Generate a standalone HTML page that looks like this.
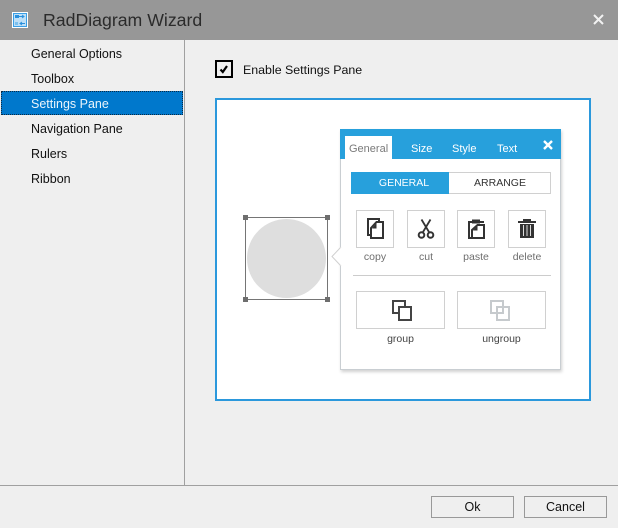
<!DOCTYPE html>
<html><head><meta charset="utf-8">
<style>
html,body{margin:0;padding:0}
body{width:618px;height:528px;position:relative;overflow:hidden;background:#efefef;font-family:"Liberation Sans",sans-serif;color:#1a1a1a}
div,span{position:absolute;box-sizing:border-box;white-space:nowrap}
.nav{left:31px;font-size:12.5px;line-height:16px;color:#111}
.ib{width:38px;height:38px;top:210px;border:1px solid #d0d0d0;background:#fff}
.lb{font-size:10.5px;line-height:14px;color:#6e6e6e;text-align:center;top:250px}
.tab{top:141px;font-size:11px;line-height:16px;color:#fff}
.btn{top:496px;height:22px;width:83px;border:1px solid #999;text-align:center;font-size:12.5px;line-height:21px;color:#111}
svg{position:absolute;overflow:visible}
</style></head><body>
<div style="left:0;top:0;width:618px;height:40px;background:#979797"></div>
<svg style="left:12px;top:12px" width="16" height="16" viewBox="0 0 16 16"><rect x=".5" y=".5" width="15" height="15" fill="#3a9fe6" stroke="#fff"/><rect x="2" y="2" width="12" height="12" fill="#bfe0f7"/><rect x="3" y="3" width="4" height="3" fill="#2a90dd"/><path d="M7 4.500h4M10 3l2 1.500L10 6M13 11.500H8M10 10l-2 1.500 2 1.500" stroke="#2a90dd" fill="none"/><rect x="3" y="10" width="3" height="3" fill="#7cc0ee"/></svg>
<div style="left:43px;top:9px;font-size:17.7px;line-height:22px;color:#2b2b2b">RadDiagram Wizard</div>
<svg style="left:593px;top:14px" width="11" height="11" viewBox="0 0 11 11"><path d="M1 1l9 9M10 1l-9 9" stroke="#f2f2f2" stroke-width="2"/></svg>

<div style="left:184px;top:40px;width:1px;height:445px;background:#a0a0a0"></div>
<div class="nav" style="top:46px">General Options</div>
<div class="nav" style="top:71px">Toolbox</div>
<div style="left:1px;top:91px;width:182px;height:24px;background:#0078cc;border:1px dotted #0a2a45"></div>
<div class="nav" style="top:96px;color:#eaf4fb">Settings Pane</div>
<div class="nav" style="top:121px">Navigation Pane</div>
<div class="nav" style="top:146px">Rulers</div>
<div class="nav" style="top:171px">Ribbon</div>

<div style="left:215px;top:60px;width:18px;height:18px;border:2px solid #000;background:#efefef"></div>
<svg style="left:219px;top:65px" width="10" height="9" viewBox="0 0 10 9"><path d="M1.500 4.500L3.800 7 8 1" fill="none" stroke="#000" stroke-width="2.200"/></svg>
<div style="left:243px;top:62px;font-size:12.4px;line-height:16px;color:#111">Enable Settings Pane</div>

<div style="left:215px;top:98px;width:376px;height:303px;border:2px solid #2b98dc;background:#fff"></div>

<div style="left:247px;top:219px;width:79px;height:79px;border-radius:50%;background:#dedede"></div>
<div style="left:245px;top:217px;width:83px;height:83px;border:1px solid #757575"></div>
<div style="left:243px;top:215px;width:5px;height:5px;background:#6e6e6e"></div>
<div style="left:325px;top:215px;width:5px;height:5px;background:#6e6e6e"></div>
<div style="left:243px;top:297px;width:5px;height:5px;background:#6e6e6e"></div>
<div style="left:325px;top:297px;width:5px;height:5px;background:#6e6e6e"></div>

<div style="left:340px;top:129px;width:221px;height:241px;background:#fff;border:1px solid #c9ced2;box-shadow:1px 2px 3px rgba(0,0,0,.18)"></div>
<svg style="left:331px;top:246px" width="11" height="22" viewBox="0 0 11 22"><path d="M10 1L1 10.500 10 20" fill="#fff" stroke="#d0d0d0"/><rect x="9.500" y="1.500" width="2" height="18" fill="#fff"/></svg>
<div style="left:340px;top:129px;width:221px;height:30px;background:#27a0dc"></div>
<div style="left:345px;top:136px;width:47px;height:23px;background:#fff"></div>
<div class="tab" style="left:349px;color:#7a7a7a">General</div>
<div class="tab" style="left:411px">Size</div>
<div class="tab" style="left:452px">Style</div>
<div class="tab" style="left:497px">Text</div>
<svg style="left:543px;top:140px" width="10" height="10" viewBox="0 0 10 10"><path d="M1 1l8 8M9 1L1 9" stroke="#fff" stroke-width="2.400"/></svg>

<div style="left:351px;top:172px;width:200px;height:22px;border:1px solid #d0d0d0;background:#fff"></div>
<div style="left:351px;top:172px;width:98px;height:22px;padding-left:8px;background:#27a0dc;color:#fff;font-size:10.5px;line-height:23px;text-align:center">GENERAL</div>
<div style="left:449px;top:172px;width:102px;height:22px;color:#333;font-size:10.5px;line-height:23px;text-align:center">ARRANGE</div>

<div class="ib" style="left:356px"></div>
<div class="ib" style="left:407px"></div>
<div class="ib" style="left:457px"></div>
<div class="ib" style="left:508px"></div>
<svg style="left:356px;top:210px" width="38" height="38" viewBox="0 0 38 38"><path d="M14 25h-2V9h11v3" fill="none" stroke="#333" stroke-width="2"/><path d="M20.500 12H27v16H15v-10z" fill="#fff" stroke="#333" stroke-width="2"/><path d="M20.500 13v5.500H16z" fill="#333"/></svg>
<svg style="left:407px;top:210px" width="38" height="38" viewBox="0 0 38 38"><path d="M14.500 9.500L22 22M23.500 9.500L16 22" stroke="#333" stroke-width="1.800" fill="none"/><circle cx="14.500" cy="25" r="2.800" fill="#fff" stroke="#333" stroke-width="2"/><circle cx="23.500" cy="25" r="2.800" fill="#fff" stroke="#333" stroke-width="2"/></svg>
<svg style="left:457px;top:210px" width="38" height="38" viewBox="0 0 38 38"><path d="M15 28h-3V12h3M23 12h3v1" fill="none" stroke="#333" stroke-width="2"/><rect x="15" y="9.500" width="8" height="4" fill="#333"/><path d="M20.500 15H27v13H15v-8z" fill="#fff" stroke="#333" stroke-width="2"/><path d="M20.500 16v4.500H16z" fill="#333"/></svg>
<svg style="left:508px;top:210px" width="38" height="38" viewBox="0 0 38 38"><path d="M10 12h18" stroke="#333" stroke-width="2"/><rect x="15" y="9" width="8" height="2" fill="#333"/><path d="M12 14h14v14H12z" fill="#333"/><path d="M15.500 15v11M19 15v11M22.500 15v11" stroke="#ddd" stroke-width="1"/></svg>
<div class="lb" style="left:356px;width:38px">copy</div>
<div class="lb" style="left:407px;width:38px">cut</div>
<div class="lb" style="left:457px;width:38px">paste</div>
<div class="lb" style="left:508px;width:38px">delete</div>

<div style="left:353px;top:275px;width:198px;height:1px;background:#ccc"></div>

<div style="left:356px;top:291px;width:89px;height:38px;border:1px solid #d0d0d0"></div>
<div style="left:457px;top:291px;width:89px;height:38px;border:1px solid #d0d0d0"></div>
<svg style="left:392px;top:300px" width="21" height="21" viewBox="0 0 21 21"><rect x="1" y="1" width="12" height="12" fill="none" stroke="#444" stroke-width="2"/><rect x="7" y="7" width="12" height="13" fill="#fff" stroke="#444" stroke-width="2"/></svg>
<svg style="left:490px;top:300px" width="21" height="21" viewBox="0 0 21 21"><rect x="1" y="1" width="12" height="12" fill="none" stroke="#c6cacd" stroke-width="2"/><rect x="7" y="7" width="12" height="13" fill="none" stroke="#c6cacd" stroke-width="2"/></svg>
<div class="lb" style="left:356px;width:89px;top:332px;color:#444">group</div>
<div class="lb" style="left:457px;width:89px;top:332px;color:#444">ungroup</div>

<div style="left:0;top:485px;width:618px;height:1px;background:#a0a0a0"></div>
<div class="btn" style="left:431px">Ok</div>
<div class="btn" style="left:524px">Cancel</div>
</body></html>
